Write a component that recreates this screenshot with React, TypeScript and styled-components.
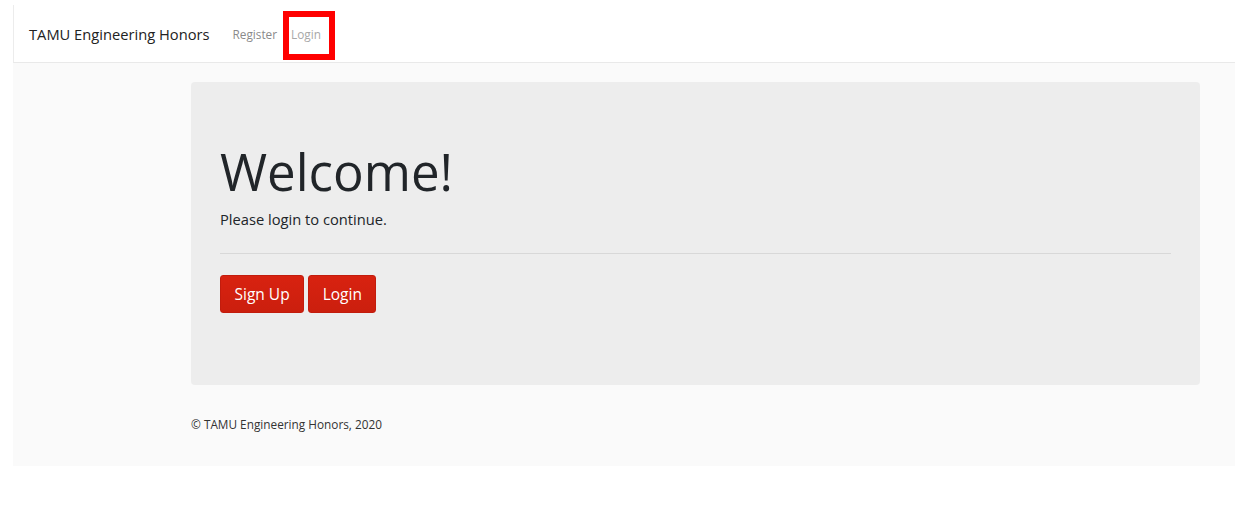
import React from 'react';
import styled, { createGlobalStyle } from 'styled-components';

const GlobalStyle = createGlobalStyle`
  body {
    margin: 0;
    background: #fff;
    font-family: "Open Sans", "Liberation Sans", sans-serif;
    color: #212529;
  }
`;

// Styled components
const Frame = styled.div`
  margin: 5px 0 0 13px;
  width: 1222px;
`;

const Navbar = styled.nav`
  display: flex;
  align-items: stretch;
  height: 58px;
  padding: 0 0 0 15px;
  background: #fff;
  border-left: 1px solid #ececec;
  border-bottom: 1px solid #e9e9e9;
  box-sizing: border-box;
`;

const Brand = styled.a`
  display: flex;
  align-items: center;
  font-size: 14.7px;
  color: #222;
  text-decoration: none;
  margin-right: 16px;
`;

const NavLinks = styled.div`
  display: flex;
`;

const NavLink = styled.a<{ $marked?: boolean }>`
  position: relative;
  display: flex;
  align-items: center;
  font-size: 11.8px;
  color: ${(p) => (p.$marked ? '#a8a8a8' : '#8a8a8a')};
  padding: 0 7px;
  text-decoration: none;
  &::after {
    content: '';
    display: ${(p) => (p.$marked ? 'block' : 'none')};
    position: absolute;
    left: -1px;
    top: 6px;
    width: 40px;
    height: 37px;
    border: 6px solid #ff0000;
  }
`;

const Main = styled.main`
  background: #fafafa;
  padding: 19px 0 0 178px;
  height: 403px;
  box-sizing: border-box;
`;

const Jumbotron = styled.section`
  width: 1009px;
  background: #ededed;
  border-radius: 4px;
  padding: 59px 29px 0;
  height: 303px;
  box-sizing: border-box;
`;

const Title = styled.h1`
  font-size: 51px;
  font-weight: 400;
  line-height: 1.2;
  margin: 0 0 6px;
  color: #212529;
`;

const Lead = styled.p`
  font-size: 14.7px;
  line-height: 1.5;
  margin: 0;
`;

const Divider = styled.hr`
  border: 0;
  border-top: 1px solid #d8d8d8;
  margin: 23px 0 21px;
`;

const Actions = styled.div`
  display: flex;
  gap: 4px;
`;

const Button = styled.a`
  display: inline-flex;
  align-items: center;
  justify-content: center;
  height: 38px;
  padding: 0 13.5px;
  box-sizing: border-box;
  font-size: 15.5px;
  color: #fff;
  background: linear-gradient(#d82210, #cb1f0e);
  border: 1px solid #c21c0d;
  border-radius: 3px;
  text-decoration: none;
`;

const Footer = styled.footer`
  font-size: 11.8px;
  color: #333;
  padding-top: 31px;
`;

const App: React.FC = () => {
  return (
    <>
      <GlobalStyle />
      <Frame>
        <Navbar>
          <Brand href="#">TAMU Engineering Honors</Brand>
          <NavLinks>
            <NavLink href="#">Register</NavLink>
            <NavLink href="#" $marked>Login</NavLink>
          </NavLinks>
        </Navbar>
        <Main>
          <Jumbotron>
            <Title>Welcome!</Title>
            <Lead>Please login to continue.</Lead>
            <Divider />
            <Actions>
              <Button href="#">Sign Up</Button>
              <Button href="#">Login</Button>
            </Actions>
          </Jumbotron>
          <Footer>© TAMU Engineering Honors, 2020</Footer>
        </Main>
      </Frame>
    </>
  );
};

export default App;
